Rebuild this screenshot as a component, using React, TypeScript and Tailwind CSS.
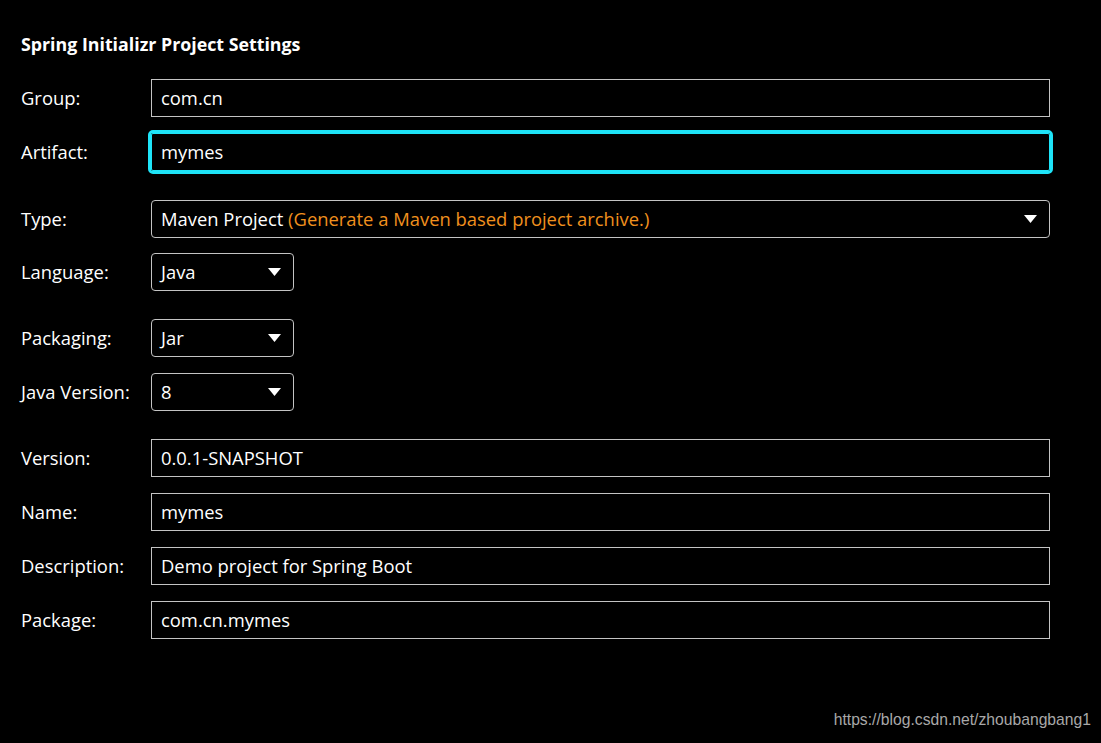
import React from 'react';

const font = { fontFamily: '"Open Sans", "Noto Sans", sans-serif' };

function Caret() {
  return (
    <svg width="13" height="8" viewBox="0 0 13 8" className="shrink-0">
      <path d="M0 0h13L6.5 8z" fill="#ffffff" />
    </svg>
  );
}

function Row({ label, children }: { label: string; children: React.ReactNode }) {
  return (
    <div className="flex items-center">
      <div className="w-[130px] shrink-0 text-[18.4px] text-white">{label}</div>
      {children}
    </div>
  );
}

function TextField({ value, focused = false }: { value: string; focused?: boolean }) {
  return (
    <div
      className={`h-[38px] w-[899px] flex items-center px-[9px] text-[18.4px] text-white bg-black border ${
        focused ? 'border-[#1ee4f8] outline-[3px] outline-solid outline-[#1ee4f8] rounded-[2px]' : 'border-[#c4c4c4]'
      }`}
    >
      {value}
    </div>
  );
}

function Select({ value, hint, wide = false }: { value: string; hint?: string; wide?: boolean }) {
  return (
    <div
      className={`h-[38px] ${wide ? 'w-[899px]' : 'w-[143px]'} flex items-center justify-between pl-[9px] pr-[12px] text-[18.4px] text-white bg-black border border-[#c4c4c4] rounded-[4px]`}
    >
      <span>
        {value}
        {hint && <span className="text-[#f0901e]"> {hint}</span>}
      </span>
      <Caret />
    </div>
  );
}

export default function App() {
  return (
    <div className="relative min-h-[743px] w-full bg-black" style={font}>
      <div className="pl-[21px] pt-[32px]">
        <h1 className="text-[17.8px] font-bold text-white leading-[24px]">Spring Initializr Project Settings</h1>

        <div className="mt-[23px] flex flex-col gap-4">
          <Row label="Group:">
            <TextField value="com.cn" />
          </Row>
          <Row label="Artifact:">
            <TextField value="mymes" focused />
          </Row>
        </div>

        <div className="mt-[29px] flex flex-col gap-[15px]">
          <Row label="Type:">
            <Select value="Maven Project" hint="(Generate a Maven based project archive.)" wide />
          </Row>
          <Row label="Language:">
            <Select value="Java" />
          </Row>
        </div>

        <div className="mt-[28px] flex flex-col gap-4">
          <Row label="Packaging:">
            <Select value="Jar" />
          </Row>
          <Row label="Java Version:">
            <Select value="8" />
          </Row>
        </div>

        <div className="mt-[28px] flex flex-col gap-4">
          <Row label="Version:">
            <TextField value="0.0.1-SNAPSHOT" />
          </Row>
          <Row label="Name:">
            <TextField value="mymes" />
          </Row>
          <Row label="Description:">
            <TextField value="Demo project for Spring Boot" />
          </Row>
          <Row label="Package:">
            <TextField value="com.cn.mymes" />
          </Row>
        </div>
      </div>

      <div
        className="absolute right-[10px] bottom-[11px] text-[15.7px] text-[#a8a8a8]"
        style={{ fontFamily: '"Liberation Sans", Arial, sans-serif' }}
      >
        https://blog.csdn.net/zhoubangbang1
      </div>
    </div>
  );
}
